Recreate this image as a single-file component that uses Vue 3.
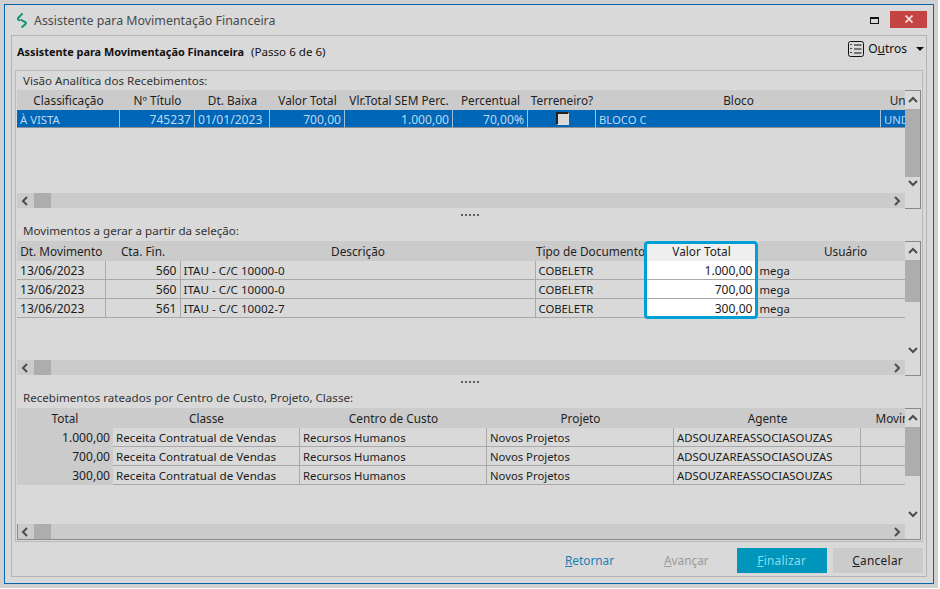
<script setup>
const grid1 = {
  cols: [
    { t: 'Classificação', w: 103, a: 'l' },
    { t: 'Nº Título', w: 75, a: 'r', f: 'n' },
    { t: 'Dt. Baixa', w: 75, a: 'l', f: 'n' },
    { t: 'Valor Total', w: 75, a: 'r', f: 'n' },
    { t: 'Vlr.Total SEM Perc.', w: 108, a: 'r', f: 'n' },
    { t: 'Percentual', w: 75, a: 'r', f: 'n' },
    { t: 'Terreneiro?', w: 68, a: 'c' },
    { t: 'Bloco', w: 285, a: 'l' },
    { t: 'Unidade', w: 64, a: 'l' }
  ],
  rows: [['À VISTA', '745237', '01/01/2023', '700,00', '1.000,00', '70,00%', '#check', 'BLOCO C', 'UND']]
}
const grid2 = {
  cols: [
    { t: 'Dt. Movimento', w: 88.5, a: 'l', f: 'n' },
    { t: 'Cta. Fin.', w: 75, a: 'r', f: 'n' },
    { t: 'Descrição', w: 355, a: 'l', f: 't' },
    { t: 'Tipo de Documento', w: 110, a: 'l' },
    { t: 'Valor Total', w: 112, a: 'r', hot: true, f: 'n' },
    { t: 'Usuário', w: 176, a: 'l' }
  ],
  rows: [
    ['13/06/2023', '560', 'ITAU - C/C 10000-0', 'COBELETR', '1.000,00', 'mega'],
    ['13/06/2023', '560', 'ITAU - C/C 10000-0', 'COBELETR', '700,00', 'mega'],
    ['13/06/2023', '561', 'ITAU - C/C 10002-7', 'COBELETR', '300,00', 'mega']
  ]
}
const grid3 = {
  cols: [
    { t: 'Total', w: 96, a: 'r', fixed: true, f: 'n' },
    { t: 'Classe', w: 187, a: 'l', f: 't' },
    { t: 'Centro de Custo', w: 187, a: 'l' },
    { t: 'Projeto', w: 187, a: 'l' },
    { t: 'Agente', w: 187, a: 'l' },
    { t: 'Movimento', w: 92, a: 'l' }
  ],
  rows: [
    ['1.000,00', 'Receita Contratual de Vendas', 'Recursos Humanos', 'Novos Projetos', 'ADSOUZAREASSOCIASOUZAS', ''],
    ['700,00', 'Receita Contratual de Vendas', 'Recursos Humanos', 'Novos Projetos', 'ADSOUZAREASSOCIASOUZAS', ''],
    ['300,00', 'Receita Contratual de Vendas', 'Recursos Humanos', 'Novos Projetos', 'ADSOUZAREASSOCIASOUZAS', '']
  ]
}
const sections = [
  { label: 'Visão Analítica dos Recebimentos:', grid: grid1, cls: 's1', selected: true },
  { label: 'Movimentos a gerar a partir da seleção:', grid: grid2, cls: 's2' },
  { label: 'Recebimentos rateados por Centro de Custo, Projeto, Classe:', grid: grid3, cls: 's3' }
]
</script>

<template>
  <div class="screen">
    <div class="window">
      <header class="titlebar">
        <svg class="logo" width="10" height="15" viewBox="0 0 10 15" fill="none" stroke="#14967f" stroke-width="2">
          <path d="M5.6 .4 1.2 5c-.6.7-.4 1.3.4 1.8l1.4.8" />
          <path d="m3.6 6.6 4.6 2.6c.9.6 1 1.2.3 1.9L4.6 14.6" />
        </svg>
        <span class="title">Assistente para Movimentação Financeira</span>
        <svg class="maximize" width="9" height="7" viewBox="0 0 9 7" fill="none">
          <rect x=".5" y=".5" width="8" height="6" stroke="#111" />
          <path d="M0 1.5h9" stroke="#111" />
        </svg>
        <div class="close">
          <svg width="8" height="8" viewBox="0 0 8 8" stroke="#f2dcdc" stroke-width="1.8">
            <path d="m.5.5 7 7M7.5.5l-7 7" />
          </svg>
        </div>
      </header>

      <main class="panel">
        <div class="panel-head">
          <p class="heading"><b>Assistente para Movimentação Financeira</b><span>(Passo 6 de 6)</span></p>
          <div class="others">
            <svg width="16" height="16" viewBox="0 0 16 16" fill="none" stroke="#111">
              <rect x=".5" y=".5" width="15" height="15" rx="2" />
              <path d="M6 4h7.5M6 8h7.5M6 12h7.5" />
              <path d="M3 3v2M3 7v2M3 11v2" stroke-dasharray="1 1" stroke-width="1.5" />
            </svg>
            <span class="others-label">O<u>u</u>tros</span>
            <i class="caret"></i>
          </div>
        </div>

        <div class="group">
          <template v-for="(s, si) in sections" :key="s.cls">
            <div v-if="si > 0" class="splitter"><i v-for="n in 5" :key="n"></i></div>
            <section class="section" :class="s.cls">
              <div class="section-label">{{ s.label }}</div>
              <div class="grid-wrap">
                <div class="grid-main">
                  <div class="grid-view">
                    <div class="row head">
                      <div
                        v-for="c in s.grid.cols"
                        :key="c.t"
                        class="th"
                        :class="{ hot: c.hot }"
                        :style="{ width: c.w + 'px' }"
                      >{{ c.t }}</div>
                    </div>
                    <div
                      v-for="(r, ri) in s.grid.rows"
                      :key="ri"
                      class="row body"
                      :class="{ selected: s.selected }"
                    >
                      <div
                        v-for="(v, ci) in r"
                        :key="ci"
                        class="td"
                        :class="[s.grid.cols[ci].a, s.grid.cols[ci].f, { hot: s.grid.cols[ci].hot, fixed: s.grid.cols[ci].fixed }]"
                        :style="{ width: s.grid.cols[ci].w + 'px' }"
                      >
                        <span v-if="v === '#check'" class="check"></span>
                        <template v-else>{{ v }}</template>
                      </div>
                    </div>
                  </div>
                  <div class="hscroll">
                    <svg class="arrow" width="8" height="10" viewBox="0 0 8 10" fill="none" stroke="#4d4d4d" stroke-width="2"><path d="M6 1 2 5l4 4" /></svg>
                    <div class="hthumb"></div>
                    <svg class="arrow right" width="8" height="10" viewBox="0 0 8 10" fill="none" stroke="#4d4d4d" stroke-width="2"><path d="m2 1 4 4-4 4" /></svg>
                  </div>
                </div>
                <div class="vscroll">
                  <svg width="10" height="8" viewBox="0 0 10 8" fill="none" stroke="#4d4d4d" stroke-width="2"><path d="m1 6 4-4 4 4" /></svg>
                  <div class="vthumb"></div>
                  <svg class="arrow-down" width="10" height="8" viewBox="0 0 10 8" fill="none" stroke="#4d4d4d" stroke-width="2"><path d="m1 2 4 4 4-4" /></svg>
                </div>
                <div v-if="s.cls === 's2'" class="hot-box"></div>
              </div>
            </section>
          </template>
        </div>

        <footer class="actions">
          <a class="link"><u>R</u>etornar</a>
          <a class="disabled"><u>A</u>vançar</a>
          <button class="btn primary"><u>F</u>inalizar</button>
          <button class="btn"><u>C</u>ancelar</button>
        </footer>
      </main>
    </div>
  </div>
</template>

<style>
html, body { margin: 0; background: #fff; }
</style>

<style scoped>
.screen {
  box-sizing: border-box;
  width: 938px;
  height: 588px;
  padding: 4px;
  background: #d0d0d0;
  font-family: "Noto Sans", "Open Sans", sans-serif;
  font-size: 11.6px;
  color: #1c1c1c;
  overflow: hidden;
}
.window {
  box-sizing: border-box;
  width: 930px;
  height: 580px;
  border: 1px solid #0a64a8;
  background: #d9d9d9;
  display: flex;
  flex-direction: column;
}
.titlebar {
  height: 30px;
  display: flex;
  align-items: center;
  padding-left: 12px;
  padding-right: 6px;
  flex: none;
}
.logo { margin-right: 7px; }
.title {
  font-size: 12.4px;
  color: #4a4a4a;
  flex: 1;
}
.maximize { margin-right: 11px; }
.close {
  width: 37px;
  height: 17px;
  margin-top: -2px;
  background: #c44444;
  display: flex;
  align-items: center;
  justify-content: center;
}
.panel {
  box-sizing: border-box;
  height: 542px;
  margin: 0 6px;
  border: 1px solid #b4b4b4;
  padding: 0 3px;
  display: flex;
  flex-direction: column;
  flex: none;
}
.panel-head {
  height: 34px;
  display: flex;
  align-items: center;
  flex: none;
}
.heading {
  margin: -4px 0 0;
  flex: 1;
  padding-left: 2px;
  color: #111;
}
.heading b { font-size: 10.9px; font-weight: 700; margin-right: 7px; }
.others {
  display: flex;
  align-items: center;
  color: #111;
  font-size: 12px;
  margin-top: -9px;
  margin-right: -1px;
}
.others-label { margin-left: 4px; }
.caret {
  width: 0;
  height: 0;
  margin-left: 9px;
  border: 4px solid transparent;
  border-top: 4px solid #111;
  border-bottom: 0;
}
.group {
  box-sizing: border-box;
  height: 472px;
  border: 1px solid #b9b9b9;
  flex: none;
  display: flex;
  flex-direction: column;
  padding: 0 0 0 1px;
}
.section { display: flex; flex-direction: column; flex: none; }
.section-label {
  height: 21px;
  line-height: 21px;
  padding-left: 6px;
  color: #333;
  flex: none;
}
.s1 .section-label { height: 19px; line-height: 19px; }
.s1 .grid-wrap { height: 119px; }
.s2 .grid-wrap { height: 135px; }
.s3 .grid-wrap { height: 132px; }
.s1 .grid-main, .s2 .grid-main { padding-bottom: 1px; }
.splitter {
  height: 11px;
  flex: none;
  display: flex;
  justify-content: center;
  align-items: center;
  gap: 2px;
  padding-left: 1px;
  box-sizing: border-box;
}
.splitter i {
  width: 2px;
  height: 2px;
  background: #5e5e5e;
}
.grid-wrap {
  position: relative;
  display: flex;
  flex: none;
}
.grid-main {
  box-sizing: border-box;
  width: 888px;
  display: flex;
  flex-direction: column;
  flex: none;
}
.grid-view { flex: 1; overflow: hidden; min-height: 0; }
.row { display: flex; }
.row.head { height: 20px; background: #cbcbcb; }
.th {
  box-sizing: border-box;
  flex: none;
  height: 20px;
  line-height: 21px;
  font-size: 11.8px;
  text-align: center;
  white-space: nowrap;
  overflow: hidden;
  color: #1f1f1f;
}
.th.hot { background: #efefef; }
.row.body { height: 19px; }
.td {
  box-sizing: border-box;
  flex: none;
  height: 19px;
  line-height: 20px;
  padding: 0 2px 0 3px;
  border-right: 1px solid #a9a9a9;
  border-bottom: 1px solid #a9a9a9;
  white-space: nowrap;
  overflow: hidden;
  font-size: 11.3px;
  color: #1c1c1c;
}
.td.n { font-size: 12.1px; }
.td.t { font-size: 11.65px; }
.td:last-child { border-right: 0; }
.td.r { text-align: right; padding-right: 3px; }
.td.c { text-align: center; }
.td.hot { background: #fff; padding-right: 5px; }
.s2 .td:nth-child(5), .s2 .td:nth-child(4) { border-right: 0; }
.s2 .td:last-child { padding-left: 2px; }
.td.fixed {
  background: #cbcbcb;
  border: 0;
  text-align: right;
  padding-right: 3px;
}
.row.selected { height: 18px; background: #0066b8; }
.row.selected .td {
  height: 18px;
  line-height: 19px;
  color: #bfd9ee;
  border-right-color: #a5bfd4;
  border-bottom-color: #8a8f95;
}
.check {
  display: inline-block;
  box-sizing: border-box;
  width: 13px;
  height: 13px;
  margin-top: 2px;
  vertical-align: top;
  background: #d9d9d9;
  border: 1px solid #dfdfdf;
  border-top: 2px solid #222;
  border-left: 2px solid #222;
}
.hscroll {
  height: 15px;
  background: #cbcbcb;
  display: flex;
  align-items: center;
  flex: none;
}
.s3 .hscroll {
  box-sizing: content-box;
  border-bottom: 1px solid #8a8a8a;
  border-left: 1px solid #8a8a8a;
}
.s3 .arrow:first-child { margin-left: 3px; }
.arrow { margin-left: 4px; margin-right: 5px; flex: none; }
.hthumb { width: 17px; height: 15px; background: #adadad; }
.arrow.right { margin-left: auto; margin-right: 4px; }
.vscroll {
  box-sizing: border-box;
  width: 16px;
  border-top: 1px solid #8a8a8a;
  border-right: 1px solid #8a8a8a;
  border-bottom: 1px solid #8a8a8a;
  display: flex;
  flex-direction: column;
  align-items: center;
  padding-top: 5px;
  flex: none;
}
.vthumb {
  align-self: stretch;
  margin-top: 5px;
  background: #adadad;
  height: 68px;
}
.s2 .vthumb { height: 42px; }
.s3 .vthumb { height: 49px; }
.arrow-down { margin-top: auto; margin-bottom: 21px; }
.hot-box {
  position: absolute;
  left: 627px;
  top: 0;
  width: 114px;
  height: 78px;
  box-sizing: border-box;
  border: 3px solid #009fd6;
  border-radius: 4px;
  pointer-events: none;
}
.actions {
  flex: 1;
  display: flex;
  align-items: center;
  padding-top: 3px;
  font-size: 11.8px;
}
.actions a { text-decoration: none; margin-top: -2px; }
.link { margin-left: 550px; color: #1a7fb5; }
.disabled { margin-left: 50px; color: #9a9a9a; }
.btn {
  box-sizing: border-box;
  width: 90px;
  height: 25px;
  border: 0;
  padding: 0 0 2px;
  margin: 0;
  background: #cbcbcb;
  font: inherit;
  color: #1c1c1c;
  letter-spacing: .3px;
}
.btn.primary {
  margin-left: 28px;
  margin-right: 6px;
  background: #0096bb;
  color: #8fdced;
}
</style>
